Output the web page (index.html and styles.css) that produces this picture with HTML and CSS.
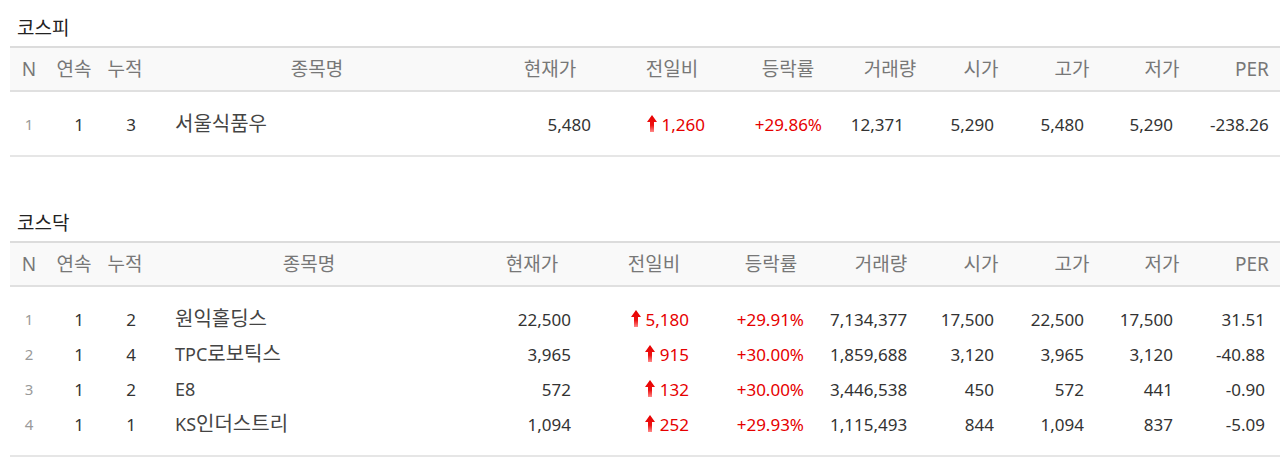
FILE: index.html
```html
<!DOCTYPE html>
<html lang="ko">
<head>
<meta charset="utf-8">
<title>연속 상한가</title>
<link rel="stylesheet" href="styles.css">
</head>
<body>
<svg class="defs" width="0" height="0" aria-hidden="true">
  <defs>
    <linearGradient id="upgrad" x1="0" y1="0" x2="0" y2="1">
      <stop offset="0" stop-color="#e60000"/>
      <stop offset="0.6" stop-color="#ee1111"/>
      <stop offset="1" stop-color="#ff8a8a"/>
    </linearGradient>
    <symbol id="up" viewBox="0 0 10 17">
      <path d="M5 0 L10 7 L7 7 L7 17 L3 17 L3 7 L0 7 Z" fill="url(#upgrad)"/>
    </symbol>
  </defs>
</svg>

<section class="market">
  <h2 class="market-title">코스피</h2>
  <table class="stock-table kospi">
    <colgroup>
      <col class="col-n"><col class="col-cont"><col class="col-acc"><col class="col-name">
      <col class="col-now"><col class="col-diff"><col class="col-rate"><col class="col-vol">
      <col class="col-open"><col class="col-high"><col class="col-low"><col class="col-per">
    </colgroup>
    <thead>
      <tr><th>N</th><th>연속</th><th>누적</th><th>종목명</th><th>현재가</th><th>전일비</th><th>등락률</th><th>거래량</th><th>시가</th><th>고가</th><th>저가</th><th>PER</th></tr>
    </thead>
    <tbody>
      <tr><td>1</td><td>1</td><td>3</td><td><span class="ko">서울식품우</span></td><td>5,480</td><td class="up"><svg class="arrow"><use href="#up"/></svg>1,260</td><td class="up">+29.86%</td><td>12,371</td><td>5,290</td><td>5,480</td><td>5,290</td><td>-238.26</td></tr>
    </tbody>
  </table>
</section>

<section class="market">
  <h2 class="market-title">코스닥</h2>
  <table class="stock-table kosdaq">
    <colgroup>
      <col class="col-n"><col class="col-cont"><col class="col-acc"><col class="col-name">
      <col class="col-now"><col class="col-diff"><col class="col-rate"><col class="col-vol">
      <col class="col-open"><col class="col-high"><col class="col-low"><col class="col-per">
    </colgroup>
    <thead>
      <tr><th>N</th><th>연속</th><th>누적</th><th>종목명</th><th>현재가</th><th>전일비</th><th>등락률</th><th>거래량</th><th>시가</th><th>고가</th><th>저가</th><th>PER</th></tr>
    </thead>
    <tbody>
      <tr><td>1</td><td>1</td><td>2</td><td><span class="ko">원익홀딩스</span></td><td>22,500</td><td class="up"><svg class="arrow"><use href="#up"/></svg>5,180</td><td class="up">+29.91%</td><td>7,134,377</td><td>17,500</td><td>22,500</td><td>17,500</td><td>31.51</td></tr>
      <tr><td>2</td><td>1</td><td>4</td><td>TPC<span class="ko">로보틱스</span></td><td>3,965</td><td class="up"><svg class="arrow"><use href="#up"/></svg>915</td><td class="up">+30.00%</td><td>1,859,688</td><td>3,120</td><td>3,965</td><td>3,120</td><td>-40.88</td></tr>
      <tr><td>3</td><td>1</td><td>2</td><td>E8</td><td>572</td><td class="up"><svg class="arrow"><use href="#up"/></svg>132</td><td class="up">+30.00%</td><td>3,446,538</td><td>450</td><td>572</td><td>441</td><td>-0.90</td></tr>
      <tr><td>4</td><td>1</td><td>1</td><td>KS<span class="ko">인더스트리</span></td><td>1,094</td><td class="up"><svg class="arrow"><use href="#up"/></svg>252</td><td class="up">+29.93%</td><td>1,115,493</td><td>844</td><td>1,094</td><td>837</td><td>-5.09</td></tr>
    </tbody>
  </table>
</section>
</body>
</html>
```

FILE: styles.css
```css
html, body {
  margin: 0;
  padding: 0;
  background: #ffffff;
  overflow: hidden;
}

body {
  width: 1280px;
  padding: 10px 0 0 10px;
  box-sizing: border-box;
  font-family: "Noto Sans", "Noto Sans CJK KR", sans-serif;
  color: #333333;
}

.defs {
  position: absolute;
  width: 0;
  height: 0;
}

.market {
  margin-bottom: 48px;
}

.market:last-child {
  margin-bottom: 0;
}

.market-title {
  margin: 0;
  padding-left: 7px;
  height: 36px;
  line-height: 36px;
  font-size: 19px;
  font-weight: normal;
  color: #222222;
}

.stock-table {
  table-layout: fixed;
  width: 1284px;
  border-collapse: collapse;
  border-spacing: 0;
  border-top: 2px solid #dcdcdc;
  border-bottom: 2px solid #e6e6e6;
}

.stock-table thead th {
  height: 42px;
  padding: 0;
  background: #f9f9f9;
  border-bottom: 2px solid #e0e0e0;
  font-size: 19px;
  line-height: 22px;
  font-weight: normal;
  color: #777777;
  text-align: center;
  white-space: nowrap;
}

.stock-table td {
  padding: 0;
  font-size: 17px;
  line-height: 35px;
  text-align: right;
  white-space: nowrap;
}

.stock-table tbody tr:first-child td {
  padding-top: 15px;
}

.stock-table tbody tr:last-child td {
  padding-bottom: 13px;
}

.ko {
  font-size: 20px;
  line-height: 20px;
}

/* columns */
.stock-table td:nth-child(1) { text-align: center; color: #9a9a9a; font-size: 15px; }
.stock-table td:nth-child(2) { text-align: center; padding-left: 10px; }
.stock-table td:nth-child(3) { text-align: center; padding-left: 12px; }
.stock-table td:nth-child(4) { text-align: left; padding-left: 25px; font-size: 18px; color: #444444; }
.stock-table td:nth-child(5) { padding-right: 25px; }
.stock-table td:nth-child(6) { padding-right: 23px; }
.stock-table td:nth-child(7) { padding-right: 26px; }
.stock-table td:nth-child(8) { padding-right: 28px; }
.stock-table td:nth-child(9) { padding-right: 36px; }
.stock-table td:nth-child(10) { padding-right: 30px; }
.stock-table td:nth-child(11) { padding-right: 37px; }
.stock-table td:nth-child(12) { padding-right: 29px; }

.stock-table td.up { color: #e60000; }

.arrow {
  width: 10px;
  height: 17px;
  margin-right: 5px;
  vertical-align: -1px;
}

/* column widths */
.col-n { width: 38px; }
.col-cont { width: 52px; }
.col-acc { width: 50px; }
.col-open { width: 98px; }
.col-high { width: 84px; }
.col-low { width: 96px; }
.col-per { width: 84px; }

.kospi .col-name { width: 334px; }
.kospi .col-now { width: 132px; }
.kospi .col-diff { width: 112px; }
.kospi .col-rate { width: 120px; }
.kospi .col-vol { width: 84px; }

.kosdaq .col-name { width: 318px; }
.kosdaq .col-now { width: 128px; }
.kosdaq .col-diff { width: 116px; }
.kosdaq .col-rate { width: 118px; }
.kosdaq .col-vol { width: 102px; }
```
